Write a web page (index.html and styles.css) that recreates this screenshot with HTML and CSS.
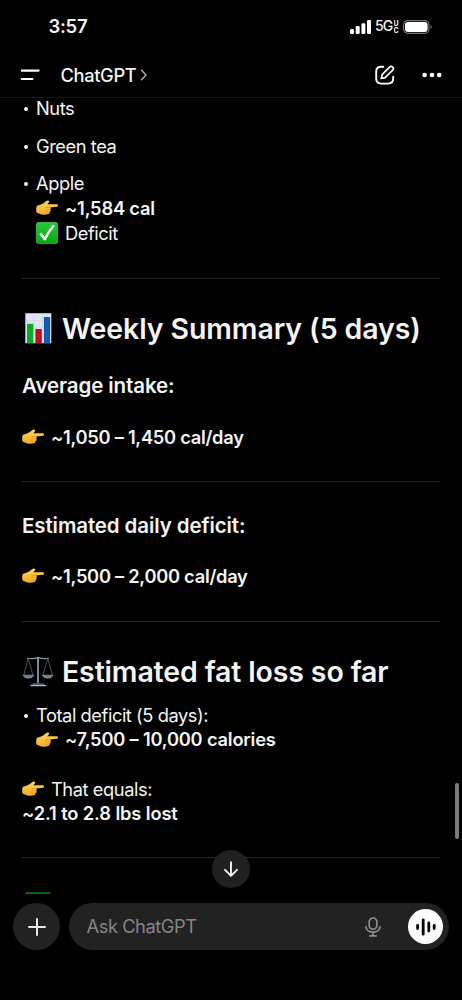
FILE: index.html
```
<!DOCTYPE html>
<html lang="en">
<head>
<meta charset="utf-8">
<meta name="viewport" content="width=device-width, initial-scale=1">
<title>ChatGPT</title>
<link rel="stylesheet" href="styles.css">
</head>
<body>
<svg class="defs" aria-hidden="true">
  <defs>
    <linearGradient id="skin" x1="0" y1="0" x2="0" y2="1"><stop offset="0" stop-color="#ffd75a"/><stop offset="1" stop-color="#f9a928"/></linearGradient>
    <linearGradient id="check" x1="0" y1="0" x2="0" y2="1"><stop offset="0" stop-color="#27cb35"/><stop offset="1" stop-color="#05a811"/></linearGradient>
    <symbol id="point" viewBox="0 0 22 16">
      <path d="M1 5.8C3.4 5.3 5.6 4.6 7.5 3.3L10 1.3C11 .3 13 .2 13.2 1.2C13.4 2.2 11.8 3.4 11.3 4.3L20.8 4.2C22.5 4.3 22.5 6.7 20.8 6.8L14 7.4C15.1 8 15 9.3 14.2 9.8C14.9 10.6 14.5 11.7 13.5 12.1C13.7 13.3 12.9 14 11.8 14.2C9.5 15 5.2 14.7 3.5 13.7L.8 12.8C-.1 10.8 0 7.2 1 5.8Z" fill="url(#skin)"/>
      <path d="M9.5 7.5L14 7.4M10 9.8H14.1M9.8 12.2L13.3 12.1" fill="none" stroke="#d98b14" stroke-width=".6" stroke-linecap="round"/>
    </symbol>
  </defs>
</svg>
<div class="screen">
  <header class="top">
    <div class="status">
      <span class="time">3:57</span>
      <div class="indicators">
        <svg class="signal" viewBox="0 0 21 14" fill="#fff"><rect x="0" y="9" width="4" height="5" rx="1.2"/><rect x="5.7" y="6" width="4" height="8" rx="1.2"/><rect x="11.4" y="3.2" width="4" height="10.8" rx="1.2"/><rect x="17" y="0" width="4" height="14" rx="1.2"/></svg>
        <span class="net">5G</span><span class="uc"><i>U</i><i>C</i></span>
        <svg class="battery" viewBox="0 0 30 14"><rect x=".6" y=".6" width="25.4" height="12.8" rx="4.3" fill="none" stroke="#777" stroke-width="1.1"/><rect x="2" y="2" width="22.6" height="10" rx="3" fill="#fff"/><path d="M27.6 5v4c1.6-.6 1.6-3.4 0-4Z" fill="#777"/></svg>
      </div>
    </div>
    <nav class="nav">
      <svg class="menu" viewBox="0 0 20 12" stroke="#fff" stroke-width="2.1" stroke-linecap="round"><path d="M1.8 1.6H18.6M1.8 10H12.4"/></svg>
      <span class="title">ChatGPT</span>
      <svg class="chev" viewBox="0 0 8 12" fill="none" stroke="#b0b0b0" stroke-width="1.4" stroke-linecap="round" stroke-linejoin="round"><path d="M1.5 1.2L6 6L1.5 10.8"/></svg>
      <svg class="edit" viewBox="0 0 20 20" fill="none" stroke="#fff" stroke-width="1.9" stroke-linecap="round" stroke-linejoin="round"><path d="M8.3 1.8H6.2Q1.2 1.8 1.2 6.8V13.6Q1.2 18.6 6.2 18.6H13.2Q18.2 18.6 18.2 13.6V11.6"/><path d="M7.1 9.7L14.6 2.1A2.1 2.1 0 0 1 17.7 5.1L10.1 12.7L6.3 13.5Z" stroke-width="1.7"/></svg>
      <svg class="more" viewBox="0 0 20 6" fill="#fff"><circle cx="2.6" cy="3" r="2.3"/><circle cx="10" cy="3" r="2.3"/><circle cx="17.2" cy="3" r="2.3"/></svg>
    </nav>
  </header>

  <main class="chat">
    <ul class="list">
      <li><span>Nuts</span></li>
      <li><span>Green tea</span></li>
      <li><span>Apple</span>
        <div class="line strong"><svg class="hand"><use href="#point"/></svg><span>~1,584 cal</span></div>
        <div class="line deficit"><svg class="tick" viewBox="0 0 22 22"><rect x=".2" y=".2" width="21.6" height="21.6" rx="2.8" fill="url(#check)" stroke="#63d069" stroke-width=".5"/><path d="M4.8 12.1L9 17.1Q12 10.3 17.2 4.3" fill="none" stroke="#fff" stroke-width="2.5" stroke-linejoin="round" stroke-linecap="round"/></svg><span>Deficit</span></div>
      </li>
    </ul>
    <hr>
    <h1 class="weekly"><svg class="glyph" viewBox="0 0 32 32"><rect x="3.3" y="1.2" width="26" height="30" fill="#dce5f1"/><path d="M3.3 8.5H29.3M3.3 16H29.3M3.3 23.5H29.3M11.5 1.2V31.2M20.5 1.2V31.2" stroke="#c5d1e3" stroke-width=".5"/><rect x="5" y="11.8" width="6.3" height="19.4" fill="#08ad20"/><rect x="13.4" y="17" width="6.4" height="14.2" fill="#b90f1c"/><rect x="21.9" y="5" width="6.2" height="26.2" fill="#1659b5"/></svg><span>Weekly Summary (5 days)</span></h1>
    <h2><span>Average intake:</span></h2>
    <p class="line strong"><svg class="hand"><use href="#point"/></svg><span class="range">~1,050 – 1,450 cal/day</span></p>
    <hr>
    <h2 class="after-rule"><span>Estimated daily deficit:</span></h2>
    <p class="line strong"><svg class="hand"><use href="#point"/></svg><span class="range">~1,500 – 2,000 cal/day</span></p>
    <hr>
    <h1><svg class="glyph" viewBox="0 0 32 32" fill="none" stroke="#5d6c79"><path d="M16 2V28" stroke="#93a2ad" stroke-width="1.7"/><path d="M5 3Q10 4.4 16 2.7Q22 4.4 27 3" stroke-width="1.2" stroke="#8798a5"/><path d="M6.2 3.5L1.8 20M6.2 3.5L11 20M25.8 3.5L21 20M25.8 3.5L30.3 20" stroke-width=".75"/><path d="M1.1 20.2H11.8Q10.5 23.2 6.5 23.2Q2.4 23.2 1.1 20.2ZM20.3 20.2H31Q29.7 23.2 25.6 23.2Q21.6 23.2 20.3 20.2Z" fill="#667d91" stroke="#a2b6c4" stroke-width=".6"/><path d="M10.5 29H21.5" stroke="#31485d" stroke-width="2"/><path d="M9 30.5H23.5" stroke="#a9bdc9" stroke-width="1.5" stroke-linecap="round"/></svg><span>Estimated fat loss so far</span></h1>
    <ul class="list total">
      <li><span>Total deficit (5 days):</span>
        <div class="line strong"><svg class="hand"><use href="#point"/></svg><span>~7,500 – 10,000 calories</span></div>
      </li>
    </ul>
    <div class="equals">
      <div class="line"><svg class="hand"><use href="#point"/></svg><span>That equals:</span></div>
      <div class="line strong"><span class="lost">~2.1 to 2.8 lbs lost</span></div>
    </div>
    <hr class="last">
    <div class="next"></div>
  </main>

  <footer class="composer">
    <button class="plus" aria-label="Add"><svg viewBox="0 0 18 18" stroke="#e8e8e8" stroke-width="2" stroke-linecap="round"><path d="M9 1V17M1 9H17"/></svg></button>
    <div class="field">
      <span class="ask">Ask ChatGPT</span>
      <svg class="mic" viewBox="0 0 16 20" fill="none" stroke="#8e8e8e" stroke-width="1.7" stroke-linecap="round"><rect x="4.2" y="1" width="7.6" height="11.2" rx="3.8"/><path d="M1 9.8C1.8 17 14.2 17 15 9.8M8 15.3V18.8M4.8 18.9H11.2"/></svg>
      <button class="voice" aria-label="Voice"><svg viewBox="0 0 20 18" stroke="#000" stroke-width="2.8" stroke-linecap="round"><path d="M1.6 7.4V10.6M7.2 1.8V16.2M12.8 5V13M18.2 7.4V10.6"/></svg></button>
    </div>
  </footer>
  <button class="down" aria-label="Scroll down"><svg viewBox="0 0 16 16" fill="none" stroke="#fff" stroke-width="1.8" stroke-linecap="round" stroke-linejoin="round"><path d="M8 1.2V14.6M2 8.8L8 14.8L14 8.8"/></svg></button>
  <div class="scrollbar"></div>
</div>
</body>
</html>
```
FILE: styles.css
```
* { box-sizing: border-box; }
body { margin: 0; background: #000; color: #f4f4f4; font-family: Inter, "Liberation Sans", sans-serif; font-size: 18.3px; line-height: 24.5px; letter-spacing: -.44px; }
svg { display: block; flex: none; }
span { white-space: nowrap; }
button { border: 0; padding: 0; display: flex; align-items: center; justify-content: center; border-radius: 50%; }
.defs { position: absolute; width: 0; height: 0; }
.screen { position: relative; width: 462px; height: 1000px; overflow: hidden; display: flex; flex-direction: column; }

.top { height: 98px; flex: none; border-bottom: 1px solid #171717; }
.status { height: 53px; padding: 0 29px 0 48.5px; display: flex; align-items: center; justify-content: space-between; }
.time { font-size: 18.5px; font-weight: 600; letter-spacing: -.3px; }
.indicators { display: flex; align-items: center; }
.signal { width: 21px; height: 14px; }
.net { margin-left: 4px; font-size: 14px; font-weight: 500; letter-spacing: -.9px; width: 18.5px; }
.uc { width: 5.5px; display: flex; flex-direction: column; font-size: 7px; font-weight: 700; line-height: 7px; letter-spacing: 0; }
.uc i { font-style: normal; height: 7px; overflow: hidden; }
.battery { width: 30px; height: 14px; margin-left: 4px; }
.nav { height: 44px; display: flex; align-items: center; padding: 0 20px; }
.menu { width: 20px; height: 12px; }
.title { margin-left: 20.5px; font-weight: 500; letter-spacing: -.35px; }
.chev { width: 8px; height: 12px; margin-left: 4px; }
.edit { width: 20px; height: 20px; margin-left: auto; }
.more { width: 20px; height: 6px; margin-left: 27px; }

.chat { flex: none; height: 796px; padding: 0 22px; overflow: hidden; }
.list { list-style: none; margin: -2px 0 0; padding: 0; display: flex; flex-direction: column; gap: 13px; }
.list li { position: relative; padding-left: 14px; }
.list li::before { content: ""; position: absolute; left: 2px; top: 11px; width: 4px; height: 4px; border-radius: 50%; background: #f4f4f4; }
.line { display: flex; align-items: center; height: 24.5px; margin: 0; }
.line.deficit { height: 26px; }
.strong { font-weight: 600; letter-spacing: -.2px; }
.range { letter-spacing: -.27px; }
.lost { letter-spacing: -.12px; }
.hand { width: 22px; height: 16px; margin-right: 7px; }
.tick { width: 22px; height: 22px; margin-right: 7px; }
hr { border: 0; height: 1px; margin: 31.5px 0 32px; background: #252525; }
p + hr { margin-top: 32.2px; }
h1 { display: flex; align-items: center; height: 36px; margin: 0; font-size: 28.5px; font-weight: 600; letter-spacing: -.14px; }
h1.weekly { height: 37px; letter-spacing: -.1px; }
.glyph { width: 32px; height: 32px; margin: 0 8px 2px 0; }
h2 { display: flex; align-items: center; height: 28px; margin: 25px 0 24px; font-size: 20.5px; font-weight: 600; letter-spacing: -.1px; }
hr:has(+ .after-rule) { margin-bottom: 0; }
.after-rule { margin-top: 30px; }
.list.total { margin-top: 13px; }
.equals { margin-top: 25px; }
hr.last { margin-top: 31px; }
.next { width: 26px; height: 4px; margin-left: 3px; margin-top: 34.5px; background: #0a6412; border-radius: 2px 2px 0 0; }

.composer { display: flex; gap: 9px; padding: 9px 13px 0; }
.plus { width: 47px; height: 47px; background: #222; }
.plus svg { width: 18px; height: 18px; }
.field { flex: 1; height: 47px; display: flex; align-items: center; border-radius: 24px; background: #222; padding: 0 6px 0 17.5px; }
.ask { color: #858585; }
.mic { width: 16px; height: 20px; margin-left: auto; margin-right: 27px; }
.voice { width: 35px; height: 35px; background: #fff; }
.voice svg { width: 20px; height: 18px; }
.down { position: absolute; left: 212px; top: 850px; width: 38px; height: 38px; background: #212121; }
.down svg { width: 16px; height: 16px; }
.scrollbar { position: absolute; right: 3px; top: 783px; width: 4px; height: 56px; border-radius: 2px; background: #7c7c7c; }
```
